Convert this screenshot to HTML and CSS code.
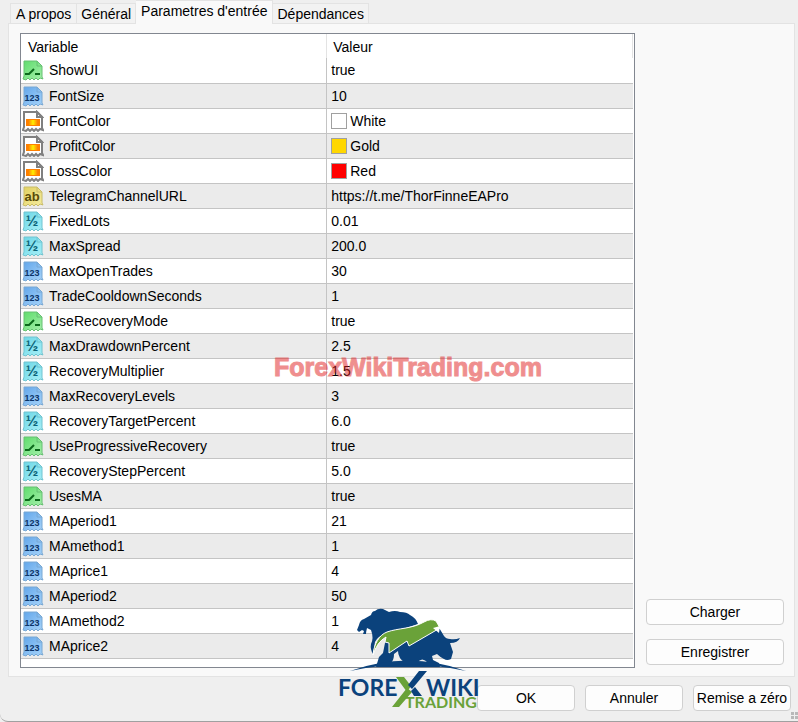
FILE: index.html
```
<!DOCTYPE html>
<html lang="fr">
<head>
    <meta charset="UTF-8">
    <meta name="viewport" content="width=device-width, initial-scale=1.0">
    <title>Parametres d'entrée</title>
    <link rel="stylesheet" href="styles.css">
</head>
<body>
    <!-- icon set -->
    <svg class="sprite" aria-hidden="true">
        <linearGradient id="g-bool" x2="1" y2="1"><stop stop-color="#5fdc6c"/><stop offset="1" stop-color="#a6f0ac"/></linearGradient>
        <linearGradient id="g-int" x2="1" y2="1"><stop stop-color="#62a6ea"/><stop offset="1" stop-color="#a8d4fa"/></linearGradient>
        <linearGradient id="g-string" x2="1" y2="1"><stop stop-color="#e0d060"/><stop offset="1" stop-color="#f6eda0"/></linearGradient>
        <linearGradient id="g-double" x2="1" y2="1"><stop stop-color="#6cd6e6"/><stop offset="1" stop-color="#a8f0f8"/></linearGradient>
        <linearGradient id="g-fire"><stop stop-color="#ff7800"/><stop offset="0.5" stop-color="#fff000"/><stop offset="1" stop-color="#ff7800"/></linearGradient>
        <symbol id="page" viewBox="0 0 22 22">
            <path d="M2 2H15L20 7V18L21 20L18 19L16 21L14 19L12 21L10 19L8 21L6 19L4 21L1 20L2 17Z"/>
            <path d="M15 2V7H20Z" fill-opacity="0.6"/>
        </symbol>
        <symbol id="bool" viewBox="0 0 22 22">
            <use href="#page"/>
            <path d="M3 15H7L12 10M13 15H18" fill="none" stroke="#0c6a1c" stroke-width="2"/>
        </symbol>
        <symbol id="color" viewBox="0 0 22 22">
            <use href="#page"/>
            <rect x="4" y="9" width="14" height="7" fill="#ff8000" stroke="none"/>
            <rect x="6" y="10" width="10" height="5" fill="url(#g-fire)" stroke="none"/>
        </symbol>
    </svg>

    <main class="dialog">
        <nav class="tabs">
            <button class="tab">A propos</button>
            <button class="tab">Général</button>
            <button class="tab active">Parametres d'entrée</button>
            <button class="tab">Dépendances</button>
        </nav>
        <section class="panel">
            <div class="list">
                <table>
                    <thead>
                        <tr><th>Variable</th><th>Valeur</th></tr>
                    </thead>
                    <tbody id="rows"></tbody>
                </table>
                <div class="watermark">ForexWikiTrading.com</div>
            </div>
            <div class="side">
                <button class="btn">Charger</button>
                <button class="btn">Enregistrer</button>
            </div>
        </section>
        <footer class="actions">
            <button class="btn">OK</button>
            <button class="btn">Annuler</button>
            <button class="btn">Remise a zéro</button>
        </footer>
        <svg class="logo" viewBox="0 0 142 108" role="img" aria-label="Forex Wiki Trading">
            <!-- bear -->
            <path fill="#0b427c" d="M19 24L21 19Q22 14 26 13L33 9Q34 5 37 5Q40 2 45 3L51 6Q57 4 62 6Q69 6 72 9Q78 12 80 18L62 24L47 28Q40 30 37 36L35 48Q32 43 33 38Q36 32 33 24L29 22Q28 26 28 28L25 28L26 25L24 24L21 26Z"/>
            <!-- bull -->
            <path fill="#0b427c" d="M38 61L41 51L45 47L48 32L100 20L106 30Q108 33 112 33Q117 34 122 32Q120 37 112 37L115 46L113 53Q109 55 106 53Q102 51 99 48L94 50L95 54L101 57L102 61Z"/>
            <path fill="#ececec" d="M53 57Q56 54 56 48L60 45Q60 52 67 57ZM79 57Q84 50 90 57Z"/>
            <path fill="#6aa239" stroke="#fff" d="M35 49C36 38 41 29 49 26C60 22 74 23 86 16Q93 12 98 15L102 22L71 40L69 35L51 47L51 37L47 36L48 31Q39 36 35 49Z"/>
            <path fill="#fff" d="M95 22L102 20L101 27Z"/>
            <path fill="#0b427c" d="M12 65Q70 44 128 65Q70 52 12 65Z"/>
            <!-- wordmark -->
            <text x="0" y="90" class="word forex">FORE</text>
            <text x="88" y="90" class="word forex">WIKI</text>
            <path fill="#6aa239" d="M58 71H66L73 80L69 86ZM54 101L69 82L74 86L61 101Z"/>
            <path fill="#0b427c" d="M81 65H89L74 83L70 79ZM73 85L77 81L84 90H76Z"/>
            <text x="67" y="102" class="word trading">TRADING</text>
        </svg>
        <svg class="grip" viewBox="0 0 8 8" aria-hidden="true">
            <path d="M1 0H4V3H1ZM5 0H8V3H5ZM1 4H4V7H1ZM5 4H8V7H5Z" fill="#b8b8b8"/>
        </svg>
    </main>

    <script>
        const params = [
            ["bool", "ShowUI", "true"],
            ["int", "FontSize", "10"],
            ["color", "FontColor", "White"],
            ["color", "ProfitColor", "Gold"],
            ["color", "LossColor", "Red"],
            ["string", "TelegramChannelURL", "https://t.me/ThorFinneEAPro"],
            ["double", "FixedLots", "0.01"],
            ["double", "MaxSpread", "200.0"],
            ["int", "MaxOpenTrades", "30"],
            ["int", "TradeCooldownSeconds", "1"],
            ["bool", "UseRecoveryMode", "true"],
            ["double", "MaxDrawdownPercent", "2.5"],
            ["double", "RecoveryMultiplier", "1.5"],
            ["int", "MaxRecoveryLevels", "3"],
            ["double", "RecoveryTargetPercent", "6.0"],
            ["bool", "UseProgressiveRecovery", "true"],
            ["double", "RecoveryStepPercent", "5.0"],
            ["bool", "UsesMA", "true"],
            ["int", "MAperiod1", "21"],
            ["int", "MAmethod1", "1"],
            ["int", "MAprice1", "4"],
            ["int", "MAperiod2", "50"],
            ["int", "MAmethod2", "1"],
            ["int", "MAprice2", "4"]
        ];
        const labels = { int: "123", string: "ab", double: "½" };

        function icon(type) {
            if (labels[type]) {
                return `<svg class="icon ${type}" viewBox="0 0 22 22"><use href="#page"/><text x="10" y="16">${labels[type]}</text></svg>`;
            }
            return `<svg class="icon ${type}" viewBox="0 0 22 22"><use href="#${type}"/></svg>`;
        }

        document.getElementById('rows').innerHTML = params.map(([type, name, value]) => {
            const swatch = type === "color" ? `<span class="swatch ${value.toLowerCase()}"></span>` : "";
            return `<tr><td><div class="cell">${icon(type)}${name}</div></td><td><div class="cell">${swatch}${value}</div></td></tr>`;
        }).join('');
    </script>
</body>
</html>
```
FILE: styles.css
```
* {
    box-sizing: border-box;
}
body {
    margin: 0;
    background: #efefef;
    color: #000;
    font-family: "Liberation Sans", Arial, sans-serif;
    font-size: 14px;
}
button {
    font: inherit;
    color: inherit;
}
.sprite {
    position: absolute;
    width: 0;
    height: 0;
}
.dialog {
    position: relative;
    min-height: 100vh;
    padding: 0 3px 0 8px;
    border-bottom: 1px solid #a0a0a0;
    border-bottom-left-radius: 8px;
}
.tabs {
    display: flex;
    align-items: flex-end;
    height: 24px;
    padding-left: 2px;
    position: relative;
}
.tab {
    height: 21px;
    padding: 0 4px;
    border: 1px solid #e3e3e3;
    border-left-width: 0;
    background: #f2f2f2;
    line-height: 18px;
}
.tab:first-child {
    padding: 0 5px;
    border-left-width: 1px;
}
.tab.active {
    height: 24px;
    padding: 0 5px 3px;
    border-bottom: 0;
    background: #f9f9f9;
}
.panel {
    display: flex;
    gap: 11px;
    margin-top: -1px;
    padding: 9px 10px 8px 11px;
    border: 1px solid #e3e3e3;
    background: #f9f9f9;
}
.list {
    position: relative;
    flex: 1;
    padding: 0 1px 8px 0;
    border: 1px solid #828790;
    background: #fff;
}
table {
    width: 100%;
    border-collapse: collapse;
    table-layout: fixed;
}
th {
    height: 24px;
    padding: 2px 6px 0;
    border-right: 1px solid #e3e3e3;
    font-weight: normal;
    text-align: left;
}
th:first-child {
    width: 50%;
    padding-left: 7px;
}
td {
    height: 25px;
    padding: 0 1px;
    border-bottom: 1px solid #c4c4c4;
}
td:first-child {
    border-right: 1px solid #c4c4c4;
}
td:last-child {
    padding-left: 4px;
}
tbody tr:nth-child(even) {
    background: #ebebeb;
}
.cell {
    display: flex;
    align-items: center;
    height: 24px;
}
.icon {
    width: 22px;
    height: 22px;
    margin-right: 5px;
    stroke-width: 1;
}
.icon text {
    stroke: none;
    text-anchor: middle;
    font-weight: bold;
}
.icon.bool {
    fill: url(#g-bool);
    stroke: #66c072;
}
.icon.int {
    fill: url(#g-int);
    stroke: #78a8d4;
}
.icon.int text {
    fill: #0c3468;
    font-size: 9px;
}
.icon.color {
    fill: #fff;
    stroke: #808080;
    stroke-width: 2;
}
.icon.string {
    fill: url(#g-string);
    stroke: #c8bc68;
}
.icon.string text {
    fill: #5a4c08;
    font-size: 13px;
}
.icon.double {
    fill: url(#g-double);
    stroke: #70c4d0;
}
.icon.double text {
    fill: #0c6478;
    font-size: 15px;
}
.swatch {
    width: 16px;
    height: 16px;
    margin-right: 3px;
    border: 1px solid #a0a0a0;
}
.white {
    background: #fff;
}
.gold {
    background: #ffd700;
}
.red {
    background: #f00;
}
.watermark {
    position: absolute;
    top: 316px;
    left: 253px;
    color: #e02020;
    font: bold 25px/34px "Liberation Sans", Arial, sans-serif;
    -webkit-text-stroke: 1px #e02020;
    opacity: 0.5;
}
.side {
    display: flex;
    flex-direction: column;
    justify-content: flex-end;
    gap: 14px;
    width: 138px;
    padding-bottom: 3px;
}
.btn {
    height: 26px;
    padding: 0;
    border: 1px solid #d0d0d0;
    border-radius: 4px;
    background: #fdfdfd;
}
.actions {
    display: flex;
    justify-content: flex-end;
    gap: 10px;
    padding: 8px 4px 10px;
}
.actions .btn {
    width: 98px;
}
.logo {
    position: absolute;
    left: 338px;
    top: 606px;
    width: 142px;
    height: 108px;
    overflow: visible;
}
.grip {
    position: absolute;
    right: 0;
    bottom: 1px;
    width: 8px;
    height: 8px;
}
.word {
    font-family: Lato, sans-serif;
    font-weight: bold;
}
.forex {
    fill: #0b427c;
    font-size: 23px;
}
.trading {
    fill: #6aa239;
    font-size: 16px;
}
```
